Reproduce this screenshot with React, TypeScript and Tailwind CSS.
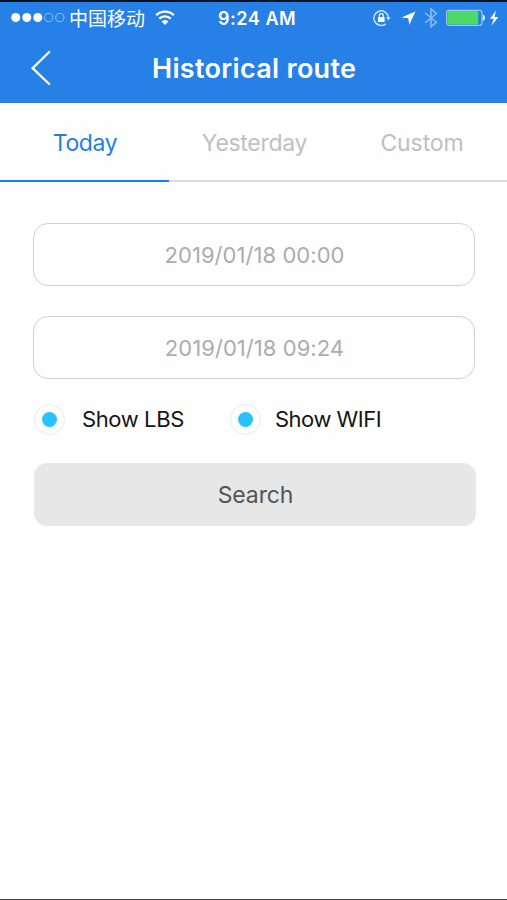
import { useState } from "react";

type Tab = {
  label: string;
  className: string;
};

const tabs: Tab[] = [
  { label: "Today", className: "tracking-[-0.4px] pl-px" },
  { label: "Yesterday", className: "tracking-[-0.3px] pl-[2px]" },
  { label: "Custom", className: "tracking-[-0.1px] pr-px" },
];

function StatusBar() {
  return (
    <div className="flex h-8 items-center text-white">
      <div className="flex w-[218px] shrink-0 items-center pl-[11px]">
        <svg width="54" height="12" viewBox="0 0 54 12" fill="none">
          <circle cx="4.7" cy="5.5" r="4.5" fill="#fff" />
          <circle cx="15.8" cy="5.5" r="4.5" fill="#fff" />
          <circle cx="26.8" cy="5.5" r="4.5" fill="#fff" />
          <circle cx="37.8" cy="5.5" r="4.1" stroke="#8fc4fb" />
          <circle cx="48.8" cy="5.5" r="4.1" stroke="#8fc4fb" />
        </svg>
        <span className="ml-[4px] pt-[3px] text-[19px] leading-8 whitespace-nowrap">中国移动</span>
        <svg className="ml-[10px]" width="20" height="16" viewBox="0 0 20 16" fill="none" stroke="#fff">
          <path d="M1.2 5.2a12.6 12.6 0 0 1 17.6 0" strokeWidth="2.4" />
          <path d="M4.3 8.6a8.2 8.2 0 0 1 11.4 0" strokeWidth="2.3" />
          <path d="M6.6 11.4a4.6 4.6 0 0 1 6.8 0L10 15z" fill="#fff" stroke="none" />
        </svg>
      </div>
      <span className="w-[154px] shrink-0 pt-px text-[18px] leading-8 font-semibold tracking-[0.55px] whitespace-nowrap">
        9:24 AM
      </span>
      <svg width="19" height="18" viewBox="0 0 19 18" fill="none">
        <path d="M16.4 8.4A7.3 7.3 0 1 0 13.8 14.8" stroke="#c9e3ff" strokeWidth="1.5" />
        <path d="M14 8.2h4.6l-2.3 3.2z" fill="#c9e3ff" />
        <rect x="6" y="8" width="6.6" height="5" rx=".6" fill="#fff" />
        <path d="M7.4 8.2V6.5a1.9 1.9 0 0 1 3.8 0v1.7" stroke="#fff" strokeWidth="1.2" />
      </svg>
      <svg className="ml-[9px]" width="16" height="15" viewBox="0 0 16 15">
        <path d="M15.4.4 9.3 14 8.3 7.2 1.4 6.4z" fill="#fff" />
      </svg>
      <svg className="ml-[8px]" width="14" height="20" viewBox="0 0 14 20" fill="none">
        <path d="M1.2 5 12.4 14.2 7 18.9V.9l5.4 4.7L1.2 14.8" stroke="#86b9f4" strokeWidth="1.6" />
      </svg>
      <svg className="ml-[7px]" width="54" height="18" viewBox="0 0 54 18" fill="none">
        <rect x="1.6" y="1.3" width="35.4" height="15" rx="2.4" stroke="#9ac8fa" strokeWidth="1.2" />
        <rect x="2.4" y="2.1" width="30.8" height="13.4" rx="1" fill="#4cd964" />
        <path d="M37.8 5.6c3 .8 3 5.8 0 6.6z" fill="#d5e9ff" />
        <path d="M51 1.6 45 9.8h3.8l-2.4 7L53.4 8h-3.9z" fill="#fff" />
      </svg>
    </div>
  );
}

function DateField({ value }: { value: string }) {
  return (
    <button className="flex h-[63px] w-[442px] items-center justify-center rounded-[15px] border border-[#cfcfcf] pt-px pl-px text-[22px] tracking-[0.05px] text-[#acacac]">
      {value}
    </button>
  );
}

type OptionProps = {
  label: string;
  checked: boolean;
  labelClass: string;
  onChange: () => void;
};

function Option({ label, checked, labelClass, onChange }: OptionProps) {
  return (
    <button
      onClick={onChange}
      className="flex items-center text-[22px] leading-[30px] whitespace-nowrap text-[#151515]"
    >
      <span className="flex size-[31px] items-center justify-center rounded-full border-[1.5px] border-[#ebebeb]">
        {checked && <span className="size-[15.5px] rounded-full bg-[#29c1ff]" />}
      </span>
      <span className={`pb-[2px] ${labelClass}`}>{label}</span>
    </button>
  );
}

export default function App() {
  const [active, setActive] = useState(0);
  const [showLbs, setShowLbs] = useState(true);
  const [showWifi, setShowWifi] = useState(true);

  return (
    <div className="flex h-[900px] w-[507px] flex-col overflow-hidden border-t-2 border-b border-t-[#061322] border-b-[#444] bg-[#fefefe] font-[Inter,'Noto_Sans_CJK_SC',sans-serif]">
      <header className="h-[101px] shrink-0 bg-[#2680e5]">
        <StatusBar />
        <div className="flex h-[69px] items-center pb-px">
          <button className="ml-[30px] w-[122px]">
            <svg width="22" height="36" viewBox="0 0 22 36" fill="none">
              <path d="M19.2 2 2.6 18.2 19.2 34" stroke="#fff" strokeWidth="2.3" strokeLinecap="round" />
            </svg>
          </button>
          <h1 className="pt-[2px] text-[27px] font-semibold tracking-[0.3px] whitespace-nowrap text-white">
            Historical route
          </h1>
        </div>
      </header>

      <nav className="grid h-[79px] shrink-0 grid-cols-3 text-[23px]">
        {tabs.map((tab, i) => (
          <button
            key={tab.label}
            onClick={() => setActive(i)}
            className={`border-b-2 pt-[3px] ${tab.className} ${
              active === i ? "border-[#1580ef] text-[#1f80ea]" : "border-[#dcdcdc] text-[#c0c0c0]"
            }`}
          >
            {tab.label}
          </button>
        ))}
      </nav>

      <main className="flex flex-col pt-[41px] pl-[33px]">
        <DateField value="2019/01/18 00:00" />
        <div className="h-[30px]" />
        <DateField value="2019/01/18 09:24" />
        <div className="mt-[25px] flex h-[31px] items-center pl-px">
          <div className="w-[196px]">
            <Option
              label="Show LBS"
              checked={showLbs}
              labelClass="ml-[17px] tracking-[-0.4px]"
              onChange={() => setShowLbs(!showLbs)}
            />
          </div>
          <Option
            label="Show WIFI"
            checked={showWifi}
            labelClass="ml-[14px] tracking-[-0.5px]"
            onChange={() => setShowWifi(!showWifi)}
          />
        </div>
        <button className="mt-7 ml-px h-[63px] w-[442px] rounded-[13px] bg-[#e7e7e7] pt-[2px] pl-px text-[23px] tracking-[-0.1px] text-[#555]">
          Search
        </button>
      </main>
    </div>
  );
}
